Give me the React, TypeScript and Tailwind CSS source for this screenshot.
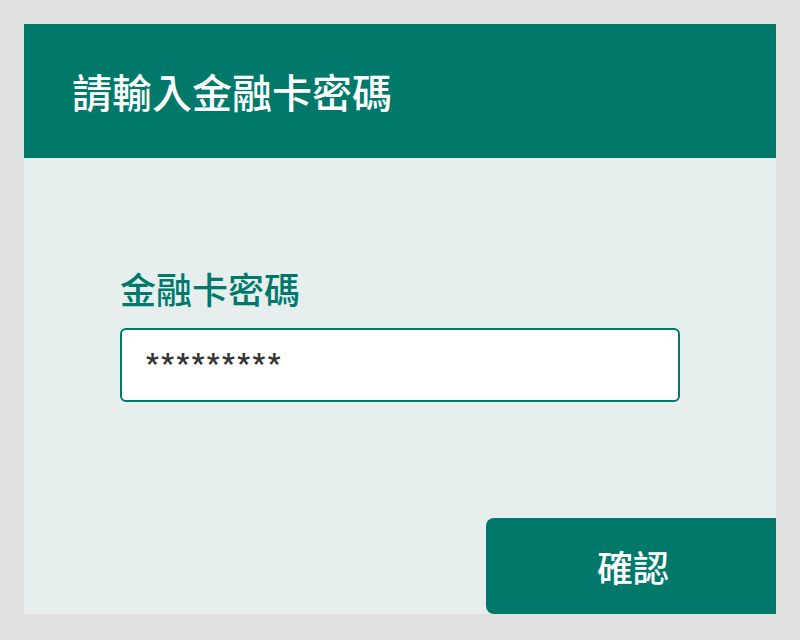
export default function App() {
  return (
    <div
      className="w-[800px] h-[640px] bg-[#e0e0e0] pt-6 px-6 pb-[26px] flex"
      style={{ fontFamily: '"Noto Sans CJK TC", "Noto Sans", sans-serif' }}
    >
      <div className="flex-1 flex flex-col bg-[#e7efee] overflow-hidden">
        <div className="h-[134px] bg-[#00796b] flex items-center pl-12">
          <h1 className="text-[40px] font-medium text-white leading-none">請輸入金融卡密碼</h1>
        </div>
        <div className="flex-1 flex flex-col pl-24 pt-[112px]">
          <label className="text-[36px] font-medium text-[#00796b] leading-none">金融卡密碼</label>
          <div className="mt-[22px] w-[560px] h-[74px] bg-white border-2 border-[#00796b] rounded-md flex items-center pl-6">
            <span className="text-[28px] font-bold text-[#333] tracking-[2.5px] pb-[2px]" style={{ fontFamily: 'Roboto, sans-serif' }}>*********</span>
          </div>
          <div className="flex-1" />
          <div className="flex justify-end">
            <button className="w-[290px] h-24 bg-[#00796b] rounded-l-lg text-white text-[36px] font-medium leading-none pl-1">確認</button>
          </div>
        </div>
      </div>
    </div>
  );
}
